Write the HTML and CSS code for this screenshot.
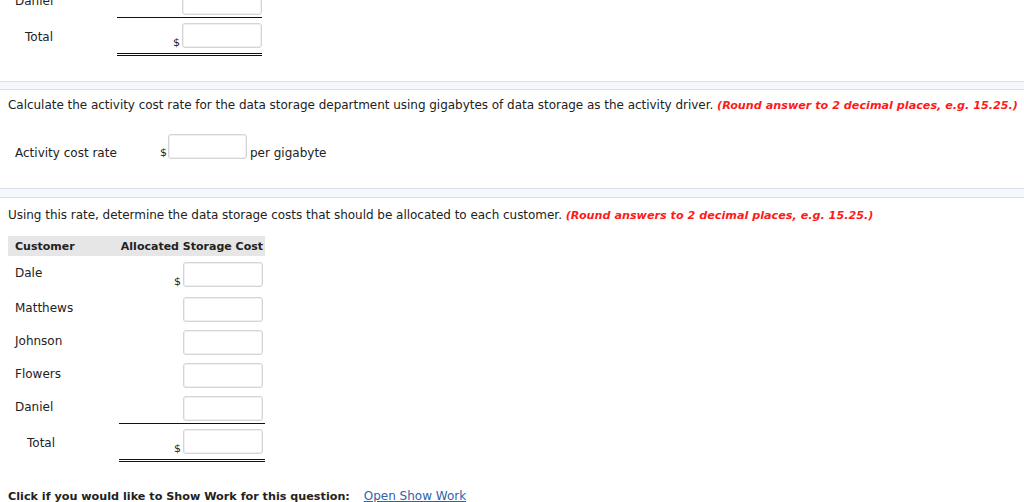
FILE: index.html
```html
<!DOCTYPE html>
<html lang="en">
<head>
    <meta charset="UTF-8">
    <title>Activity cost rate</title>
    <link rel="stylesheet" href="styles.css">
</head>
<body>

<!-- tail of the previous answer table -->
<div class="grid grid-top">
    <div class="row last">
        <div class="label">Daniel</div>
        <div class="amount"><input type="text" class="box"></div>
    </div>
    <div class="row total">
        <div class="label">Total</div>
        <div class="amount"><span class="dollar">$</span><input type="text" class="box"></div>
    </div>
</div>

<div class="divider divider-one"></div>

<div class="question">
    <p class="prompt">Calculate the activity cost rate for the data storage department using gigabytes of data storage as the activity driver. <span class="hint">(Round answer to 2 decimal places, e.g. 15.25.)</span></p>
    <div class="rate-row">
        <span class="rate-label">Activity cost rate</span>
        <span class="dollar">$</span>
        <input type="text" class="box">
        <span class="unit">per gigabyte</span>
    </div>
</div>

<div class="divider divider-two"></div>

<div class="question">
    <p class="prompt">Using this rate, determine the data storage costs that should be allocated to each customer. <span class="hint">(Round answers to 2 decimal places, e.g. 15.25.)</span></p>

    <div class="grid grid-bottom">
        <div class="head">
            <div class="label">Customer</div>
            <div class="amount">Allocated Storage Cost</div>
        </div>
        <div class="row first">
            <div class="label">Dale</div>
            <div class="amount"><span class="dollar">$</span><input type="text" class="box"></div>
        </div>
        <div class="row">
            <div class="label">Matthews</div>
            <div class="amount"><input type="text" class="box"></div>
        </div>
        <div class="row">
            <div class="label">Johnson</div>
            <div class="amount"><input type="text" class="box"></div>
        </div>
        <div class="row">
            <div class="label">Flowers</div>
            <div class="amount"><input type="text" class="box"></div>
        </div>
        <div class="row last">
            <div class="label">Daniel</div>
            <div class="amount"><input type="text" class="box"></div>
        </div>
        <div class="row total">
            <div class="label">Total</div>
            <div class="amount"><span class="dollar">$</span><input type="text" class="box"></div>
        </div>
    </div>
</div>

<p class="show-work">Click if you would like to Show Work for this question: <a href="#">Open Show Work</a></p>

</body>
</html>
```

FILE: styles.css
```css
body {
    font-family: 'DejaVu Sans', Verdana, sans-serif;
    font-size: 12px;
    color: #222;
    margin: 0;
    background-color: #fff;
    overflow: hidden;
}

p {
    margin: 0;
}

.box {
    box-sizing: border-box;
    width: 80px;
    height: 25px;
    border: 1px solid #d4d4d4;
    border-radius: 3px;
    box-shadow: inset 0 0 0 1px #f0f0f0;
    background-color: #fff;
    margin: 0;
    padding: 0 4px;
    font: inherit;
}

.dollar {
    align-self: flex-end;
    font-size: 11px;
    line-height: 11px;
    margin-right: 2px;
}

/* answer grids */
.grid {
    margin-left: 8px;
    width: 257px;
}

.grid-top {
    margin-top: -10px;
    width: 254px;
}

.row,
.head {
    display: flex;
    align-items: center;
}

.row {
    padding-bottom: 8px;
}

.row.first {
    padding-bottom: 10px;
}

.row.last {
    padding-bottom: 3px;
}

.label {
    width: 109px;
    padding-left: 7px;
    box-sizing: border-box;
}

.amount {
    flex: 1;
    display: flex;
    justify-content: flex-end;
    align-items: stretch;
}

.row .label {
    margin-top: -3px;
}

.row.total {
    padding: 5px 0;
}

.row.total .label {
    padding-left: 19px;
    margin-top: -1px;
}

/* single rule above the total, double rule below it */
.grid .row.total .amount {
    border-top: 1px solid #111;
    border-bottom: 3px double #111;
    margin-top: -6px;
    margin-bottom: -5px;
    padding: 5px 0;
}

.grid-top .row.total .label {
    padding-left: 17px;
}

.grid-bottom .row.total .amount {
    margin-left: 2px;
}

.grid-bottom .box {
    margin-right: 2px;
}

.head {
    background-color: #e6e6e6;
    height: 20px;
    font-size: 11px;
    font-weight: bold;
    margin-bottom: 6px;
}

.head .amount {
    justify-content: flex-end;
    padding-right: 2px;
}

/* section separators */
.divider {
    height: 7px;
    border-top: 1px solid #dcdee6;
    border-bottom: 1px solid #dcdee6;
    background-color: #f4f7fb;
}

.divider-one {
    margin-top: 25px;
}

.divider-two {
    height: 8px;
    margin-top: 29px;
}

.question {
    padding: 0 8px;
}

.prompt {
    margin-top: 8px;
    line-height: 14px;
    white-space: nowrap;
    letter-spacing: -0.03px;
}

.question + .divider + .question .prompt {
    margin-top: 10px;
}

.hint {
    color: #ff1a1a;
    font-size: 11.2px;
    font-weight: bold;
    font-style: italic;
    letter-spacing: 0;
}

.rate-row {
    display: flex;
    align-items: flex-end;
    margin-top: 21px;
    padding-left: 7px;
}

.rate-label {
    width: 145px;
    margin-bottom: -1px;
}

.rate-row .dollar {
    margin-right: 1px;
    margin-bottom: 1px;
}

.rate-row .box {
    width: 79px;
}

.unit {
    margin-left: 3px;
    margin-bottom: -1px;
}

.grid-bottom {
    margin: 13px 0 0 0;
}

.show-work {
    margin: 27px 0 0 8px;
    font-size: 11.2px;
    font-weight: bold;
}

.show-work a {
    font-size: 12px;
    font-weight: normal;
    color: #2f62a8;
    margin-left: 10px;
}
```
